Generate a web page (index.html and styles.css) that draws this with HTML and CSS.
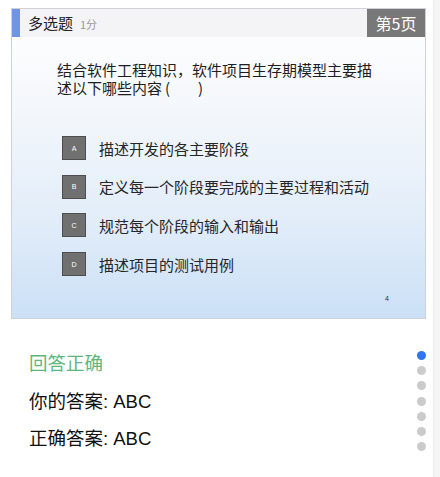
FILE: index.html
```html
<!DOCTYPE html>
<html lang="zh-CN">
<head>
<meta charset="utf-8">
<link rel="stylesheet" href="styles.css">
</head>
<body>
<div class="page">
  <div class="main">
    <div class="slide">
      <div class="slide-head">
        <div class="head-bar"></div>
        <div class="head-title">多选题</div>
        <div class="head-score">1分</div>
        <div class="head-page">第5页</div>
      </div>
      <div class="slide-body">
        <div class="question">结合软件工程知识，软件项目生存期模型主要描述以下哪些内容<span class="paren">(</span><span class="blank"></span>)</div>
        <div class="options">
          <div class="option"><span class="opt-key">A</span><span class="opt-text">描述开发的各主要阶段</span></div>
          <div class="option"><span class="opt-key">B</span><span class="opt-text">定义每一个阶段要完成的主要过程和活动</span></div>
          <div class="option"><span class="opt-key">C</span><span class="opt-text">规范每个阶段的输入和输出</span></div>
          <div class="option"><span class="opt-key">D</span><span class="opt-text">描述项目的测试用例</span></div>
        </div>
        <div class="slide-num">4</div>
      </div>
    </div>
    <div class="answer">
      <div class="answer-lines">
        <div class="result">回答正确</div>
        <div class="line">你的答案: ABC</div>
        <div class="line">正确答案: ABC</div>
      </div>
      <div class="dots">
        <span class="dot active"></span>
        <span class="dot"></span>
        <span class="dot"></span>
        <span class="dot"></span>
        <span class="dot"></span>
        <span class="dot"></span>
        <span class="dot"></span>
      </div>
    </div>
  </div>
  <div class="strip"></div>
</div>
</body>
</html>
```
FILE: styles.css
```css
* { box-sizing: border-box; }
html, body { margin: 0; padding: 0; background: #fff; }
body {
  font-family: "Noto Sans CJK SC", "Noto Sans", sans-serif;
  width: 440px;
  height: 477px;
  overflow: hidden;
}
.page { display: flex; height: 477px; }
.main { width: 433px; }
.strip { width: 7px; background: #f5f5f6; border-left: 1px solid #ececec; }

.slide {
  margin: 8px 0 0 11px;
  width: 415px;
  height: 311px;
  border: 1px solid #cfd3d8;
  display: flex;
  flex-direction: column;
}
.slide-head {
  height: 28px;
  display: flex;
  align-items: center;
  background: #f4f4f6;
}
.head-bar { width: 8px; height: 28px; background: #6d97e4; }
.head-title {
  margin-left: 8px;
  font-size: 15px;
  color: #222;
  line-height: 28px;
}
.head-score {
  margin-left: 7px;
  font-size: 11px;
  color: #999;
  line-height: 28px;
  padding-top: 2px;
}
.head-page {
  margin-left: auto;
  width: 58px;
  height: 28px;
  background: #787878;
  color: #fff;
  font-size: 16px;
  line-height: 28px;
  text-align: center;
}
.slide-body {
  flex: 1;
  position: relative;
  background: linear-gradient(to bottom, #fdfdfe 0%, #f2f6fb 30%, #e2edf9 65%, #cbe0f6 100%);
  padding: 24px 0 0 45px;
}
.question {
  width: 322px;
  font-size: 15px;
  line-height: 18px;
  color: #1e1e1e;
}
.paren { margin-left: 3px; }
.blank { display: inline-block; width: 28px; }
.options {
  margin-top: 39px;
  padding-left: 5px;
  display: flex;
  flex-direction: column;
  gap: 14.7px;
}
.option { display: flex; align-items: center; height: 24px; }
.opt-key {
  width: 24px;
  height: 24px;
  background: #707070;
  border: 1px solid #4e4e4e;
  color: #fff;
  font-family: "Liberation Sans", sans-serif;
  font-size: 7px;
  display: flex;
  align-items: center;
  justify-content: center;
}
.opt-text {
  margin-left: 13px;
  font-size: 15px;
  color: #262626;
}
.slide-num {
  position: absolute;
  right: 36px;
  bottom: 16px;
  font-family: "Liberation Sans", sans-serif;
  font-size: 7px;
  color: #333;
}

.answer {
  display: flex;
  justify-content: space-between;
  padding: 26px 7px 0 29px;
}
.answer-lines { display: flex; flex-direction: column; }
.result, .line {
  font-family: "Liberation Sans", "Noto Sans CJK SC", sans-serif;
  font-size: 18.5px;
  line-height: 37.5px;
  color: #111;
}
.result { color: #5cb77e; }
.dots {
  margin-top: 6px;
  display: flex;
  flex-direction: column;
  gap: 6.2px;
}
.dot {
  width: 9px;
  height: 9px;
  border-radius: 50%;
  background: #cbcbcb;
}
.dot.active { background: #2f76ee; }
```
